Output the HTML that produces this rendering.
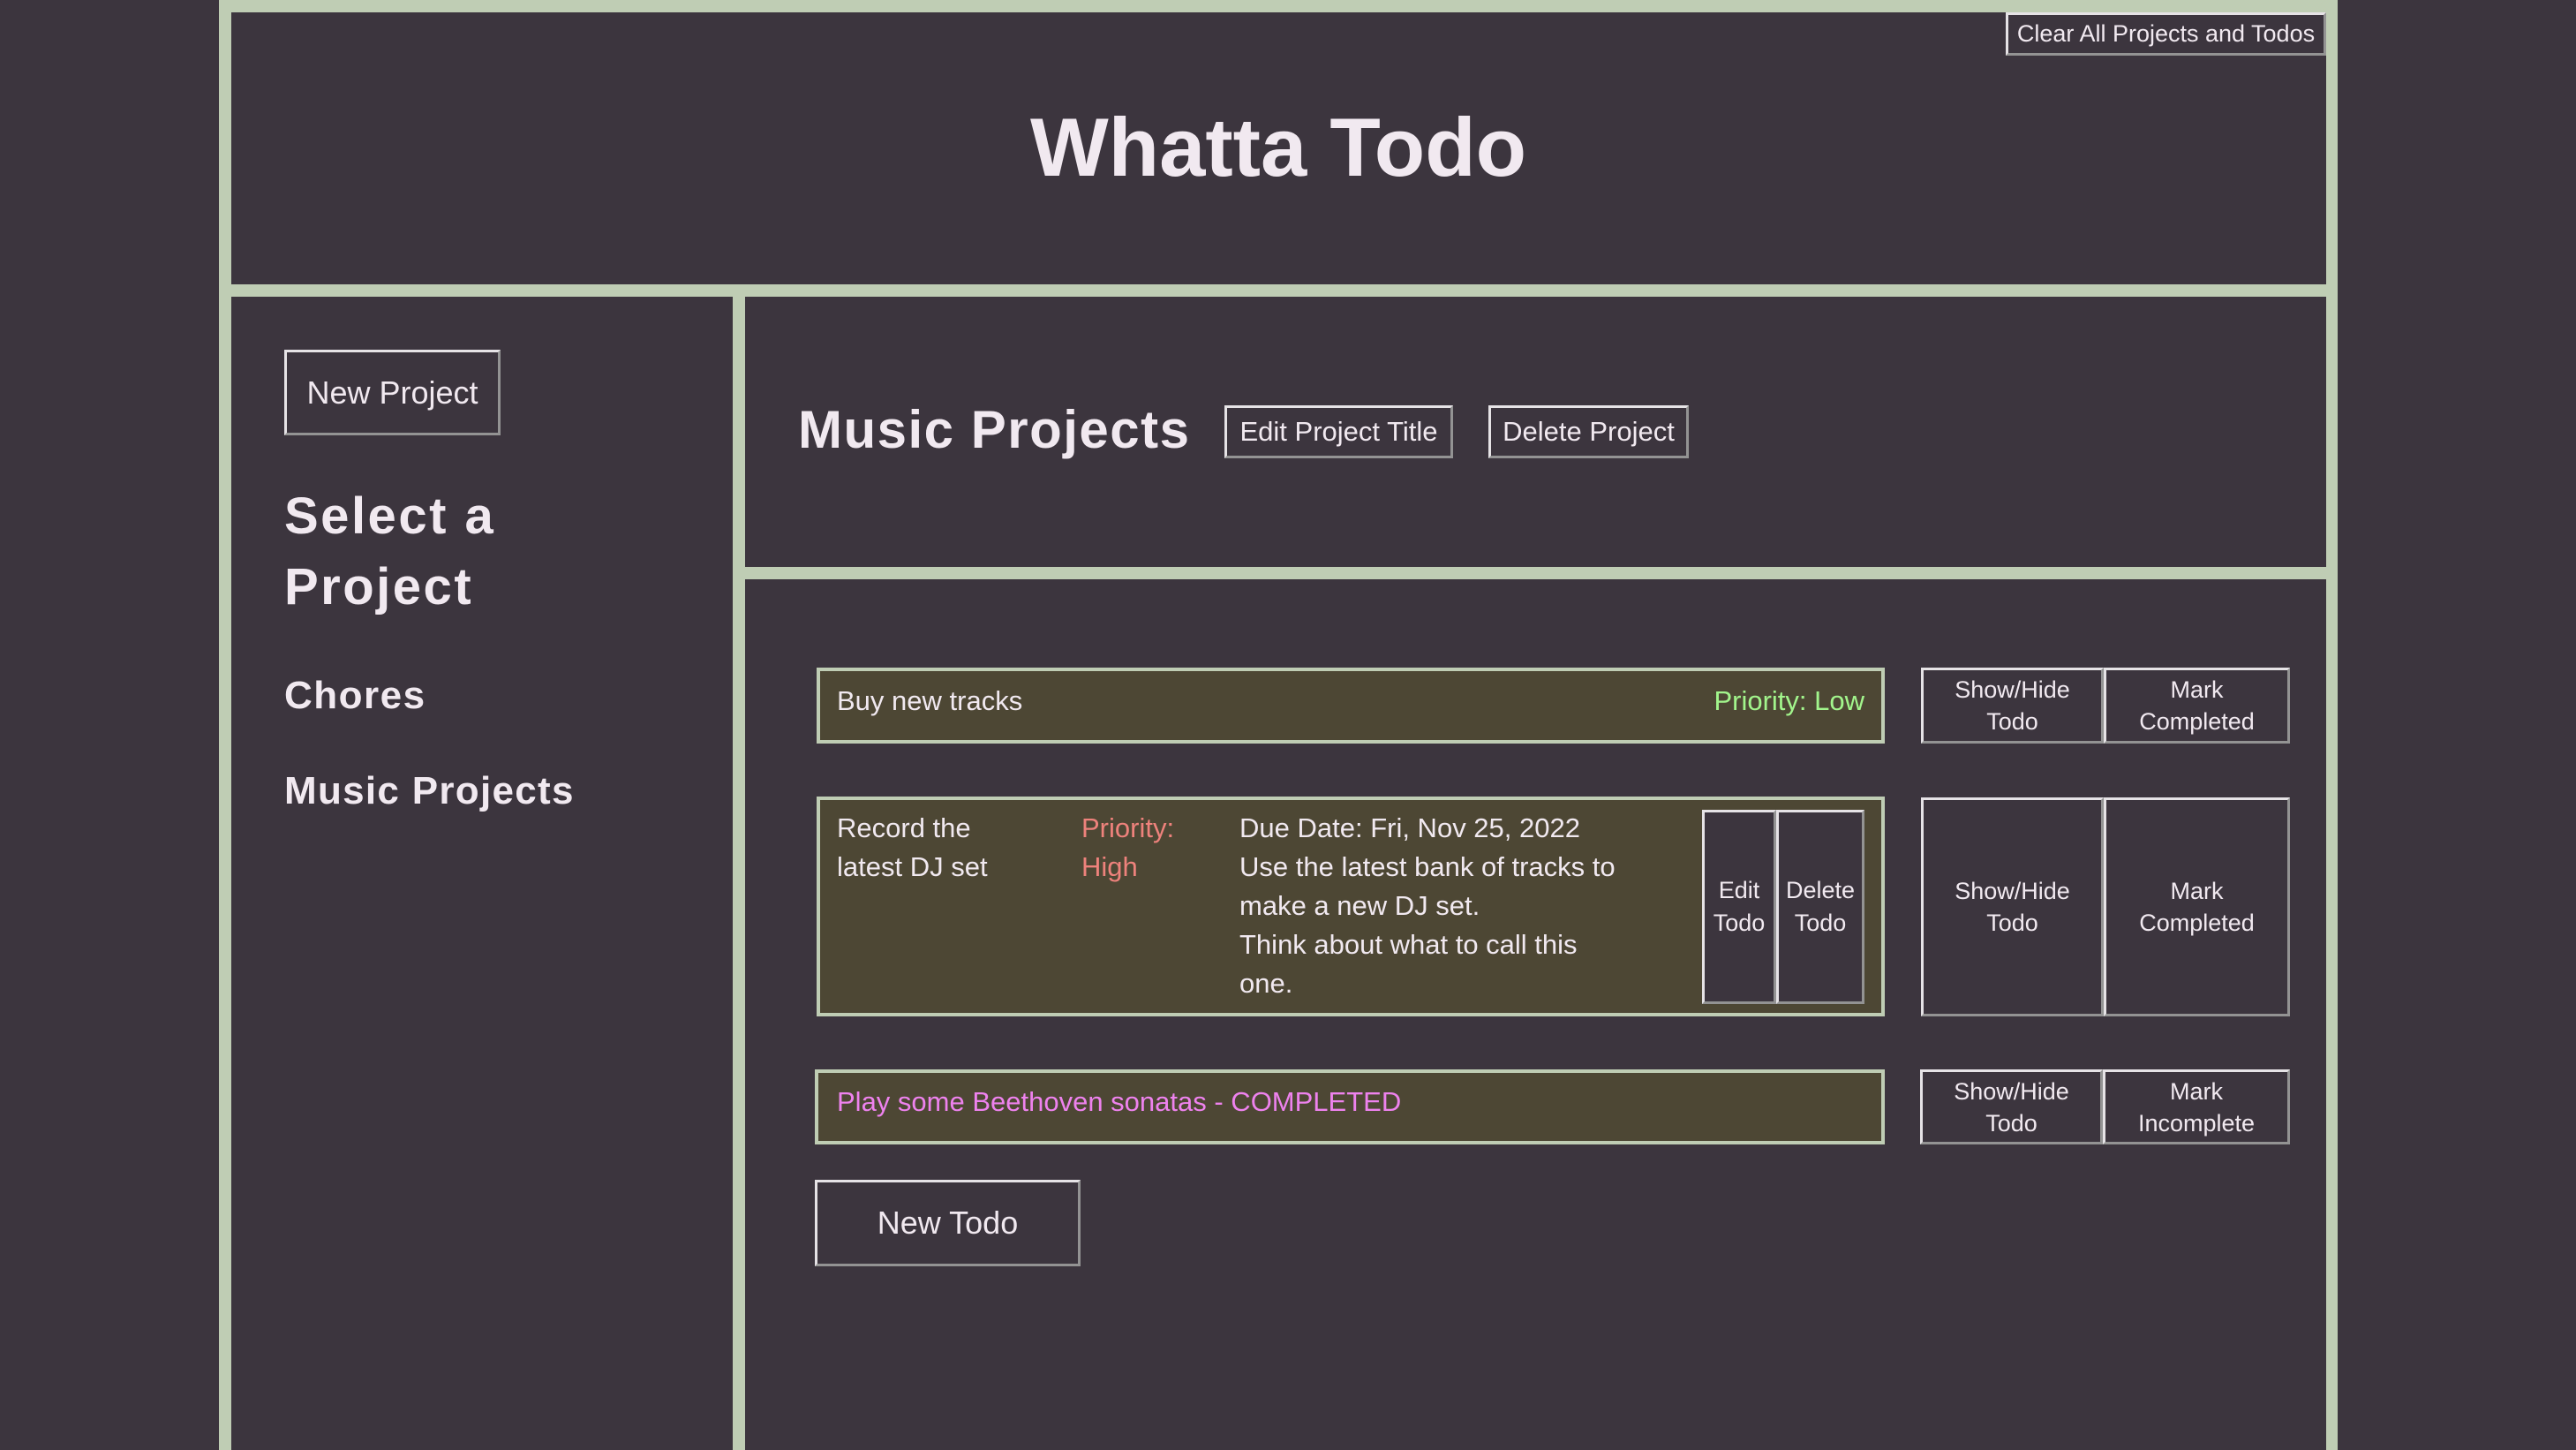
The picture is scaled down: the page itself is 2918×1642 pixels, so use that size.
<!DOCTYPE html>
<html><head><meta charset="utf-8"><style>
*{margin:0;padding:0;box-sizing:border-box}
body{width:2918px;height:1642px;background:#3c353e;font-family:"Liberation Sans",sans-serif;color:#f1e9f0;position:relative;overflow:hidden}
.g{position:absolute;background:#bfcdb4}
.a{position:absolute;white-space:nowrap}
.btn{position:absolute;background:#3c353e;border:3px solid;border-color:#e6e3e6 #939393 #939393 #e6e3e6;color:#f1e9f0;display:flex;align-items:center;justify-content:center;text-align:center;white-space:nowrap}
.todo{position:absolute;background:#4d4734;border:4px solid #bfcdb4}
.rb{font-size:27px;line-height:36px}
</style></head><body>
<div class="g" style="left:248px;top:0;width:2400px;height:14px"></div>
<div class="g" style="left:248px;top:0;width:14px;height:1642px"></div>
<div class="g" style="left:2635px;top:0;width:13px;height:1642px"></div>
<div class="g" style="left:248px;top:322px;width:2400px;height:14px"></div>
<div class="g" style="left:830px;top:322px;width:14px;height:1320px"></div>
<div class="g" style="left:830px;top:642px;width:1818px;height:14px"></div>

<div class="btn" style="left:2272px;top:14px;width:363px;height:49px;font-size:27px">Clear All Projects and Todos</div>
<div class="a" style="left:0;width:2896px;text-align:center;top:112px;font-size:94px;font-weight:bold;line-height:110px">Whatta Todo</div>

<div class="btn" style="left:322px;top:396px;width:245px;height:97px;font-size:36px">New Project</div>
<div class="a" style="left:322px;top:545px;font-size:58px;font-weight:bold;line-height:80px;letter-spacing:2.5px">Select a<br>Project</div>
<div class="a" style="left:322px;top:760px;font-size:44px;font-weight:bold;line-height:56px;letter-spacing:1.5px">Chores</div>
<div class="a" style="left:322px;top:868px;font-size:44px;font-weight:bold;line-height:56px;letter-spacing:1.3px">Music Projects</div>

<div class="a" style="left:904px;top:452px;font-size:60px;font-weight:bold;line-height:70px;letter-spacing:1.5px">Music Projects</div>
<div class="btn" style="left:1387px;top:459px;width:259px;height:60px;font-size:31px">Edit Project Title</div>
<div class="btn" style="left:1686px;top:459px;width:227px;height:60px;font-size:31px">Delete Project</div>

<div class="todo" style="left:925px;top:756px;width:1210px;height:86px"></div>
<div class="a" style="left:948px;top:774px;font-size:31px;line-height:40px">Buy new tracks</div>
<div class="a" style="right:806px;top:774px;font-size:31px;line-height:40px;color:#a2f58c">Priority: Low</div>
<div class="btn rb" style="left:2176px;top:756px;width:207px;height:86px">Show/Hide<br>Todo</div>
<div class="btn rb" style="left:2383px;top:756px;width:211px;height:86px">Mark<br>Completed</div>

<div class="todo" style="left:925px;top:902px;width:1210px;height:249px"></div>
<div class="a" style="left:948px;top:916px;font-size:31px;line-height:44px">Record the<br>latest DJ set</div>
<div class="a" style="left:1225px;top:916px;font-size:31px;line-height:44px;color:#ee827c">Priority:<br>High</div>
<div class="a" style="left:1404px;top:916px;font-size:31px;line-height:44px">Due Date: Fri, Nov 25, 2022<br>Use the latest bank of tracks to<br>make a new DJ set.<br>Think about what to call this<br>one.</div>
<div class="btn" style="left:1928px;top:917px;width:84px;height:220px;font-size:27px;line-height:37px">Edit<br>Todo</div>
<div class="btn" style="left:2012px;top:917px;width:100px;height:220px;font-size:27px;line-height:37px">Delete<br>Todo</div>
<div class="btn rb" style="left:2176px;top:903px;width:207px;height:248px">Show/Hide<br>Todo</div>
<div class="btn rb" style="left:2383px;top:903px;width:211px;height:248px">Mark<br>Completed</div>

<div class="todo" style="left:923px;top:1211px;width:1212px;height:85px"></div>
<div class="a" style="left:948px;top:1228px;font-size:31px;line-height:40px;color:#ee82ee">Play some Beethoven sonatas - COMPLETED</div>
<div class="btn rb" style="left:2175px;top:1211px;width:207px;height:85px">Show/Hide<br>Todo</div>
<div class="btn rb" style="left:2382px;top:1211px;width:212px;height:85px">Mark<br>Incomplete</div>

<div class="btn" style="left:923px;top:1336px;width:301px;height:98px;font-size:36px">New Todo</div>
</body></html>
